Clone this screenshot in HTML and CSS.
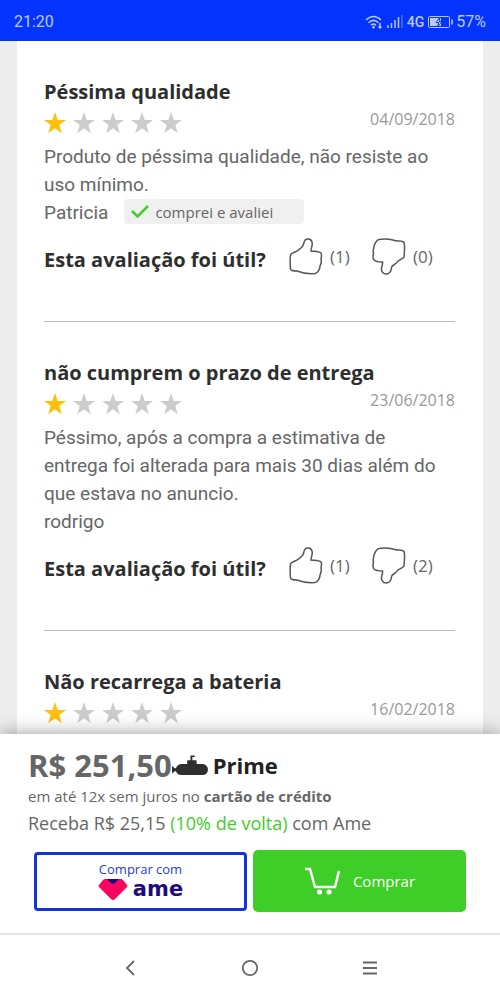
FILE: index.html
```html
<!DOCTYPE html>
<html lang="pt-BR">
<head>
<meta charset="utf-8">
<meta name="viewport" content="width=device-width, initial-scale=1">
<title>Avaliações</title>
<link rel="stylesheet" href="styles.css">
</head>
<body>
<svg class="defs" aria-hidden="true">
  <symbol id="star" viewBox="0 0 22 22"><path d="M11 0l2.7 7.9h8.3l-6.7 5 2.5 8.3L11 16.200l-6.800 5 2.500-8.300-6.700-5h8.300z"/></symbol>
  <symbol id="up" viewBox="0 0 34 37"><path d="M6 14C9 13 11 11 13 9C15 7 14.500 5 15.500 3C17 0 22 .5 23 4C24 7 22 10 22 13C25 13.500 30 13 32 15C33 17 32.500 19 32 21C33 24 32 26 31 28C31 31 29 35 26 35.500C20 36 13 35 8 33C5 33 2 33 1.500 31C1 26 1 21 1.500 17C2 15 4 15 6 14Z"/></symbol>
  <symbol id="down" viewBox="0 0 34 37"><path d="M7 1.500C12 .5 17 1 21 2C25 4 30 2 32 4.500C33 8 32.500 14 32 19C31 21 28 21.500 26 23C24 27 19 27 19.500 30C19 34 17 36 14 36C11 36 9 33 9.500 30C10 27 11 26 10.500 24C7 24 4 24 2 22C.5 20 1 17 1.500 15C.5 12 2 11 2 8C3 6 4 2 7 1.500Z"/></symbol>
</svg>

<header class="status">
  <span class="clock">21:20</span>
  <svg class="wifi" viewBox="0 0 18 14"><path d="M1 5Q8.500-2 16 5M3.500 7.800Q8.500 3 13.500 7.800M6 10.300Q8.500 8 11 10.300"/><circle cx="8.500" cy="12.300" r="1.200"/><path d="M15 13V8M13.500 11.500L15 13l1.500-1.500"/></svg>
  <svg class="signal" viewBox="0 0 16 13"><path d="M1 13v-3M4.500 13V8M8 13V5M11.500 13V2"/><path class="faint" d="M15 13V0"/></svg>
  <span class="net">4G</span>
  <svg class="battery" viewBox="0 0 26 12"><rect class="shell" x=".5" y=".5" width="21" height="11" rx="1"/><rect x="2" y="2" width="11" height="8"/><path d="M24 3.500v5"/><path class="bolt" d="M12 1.500L8 6.500h3L9.500 10.500 14 5.500h-3z"/></svg>
  <span class="percent">57%</span>
</header>

<main class="page">
  <div class="card">
    <article class="review">
      <h2 class="title">Péssima qualidade</h2>
      <div class="rating">
        <div class="stars" role="img" aria-label="1 de 5"><svg class="on"><use href="#star"/></svg><svg><use href="#star"/></svg><svg><use href="#star"/></svg><svg><use href="#star"/></svg><svg><use href="#star"/></svg></div>
        <time class="date">04/09/2018</time>
      </div>
      <p class="text">Produto de péssima qualidade, não resiste ao uso mínimo.</p>
      <div class="author">Patricia <span class="badge"><svg class="check" viewBox="0 0 18 13"><path d="M1 6l5.500 5.500L17 1"/></svg>comprei e avaliei</span></div>
      <div class="votes">
        <span class="question">Esta avaliação foi útil?</span>
        <button class="vote" aria-label="Útil"><svg><use href="#up"/></svg>(1)</button>
        <button class="vote" aria-label="Não útil"><svg><use href="#down"/></svg>(0)</button>
      </div>
    </article>
    <article class="review">
      <h2 class="title">não cumprem o prazo de entrega</h2>
      <div class="rating">
        <div class="stars" role="img" aria-label="1 de 5"><svg class="on"><use href="#star"/></svg><svg><use href="#star"/></svg><svg><use href="#star"/></svg><svg><use href="#star"/></svg><svg><use href="#star"/></svg></div>
        <time class="date">23/06/2018</time>
      </div>
      <p class="text">Péssimo, após a compra a estimativa de entrega foi alterada para mais 30 dias além do que estava no anuncio.</p>
      <div class="author">rodrigo</div>
      <div class="votes">
        <span class="question">Esta avaliação foi útil?</span>
        <button class="vote" aria-label="Útil"><svg><use href="#up"/></svg>(1)</button>
        <button class="vote" aria-label="Não útil"><svg><use href="#down"/></svg>(2)</button>
      </div>
    </article>
    <article class="review">
      <h2 class="title">Não recarrega a bateria</h2>
      <div class="rating">
        <div class="stars" role="img" aria-label="1 de 5"><svg class="on"><use href="#star"/></svg><svg><use href="#star"/></svg><svg><use href="#star"/></svg><svg><use href="#star"/></svg><svg><use href="#star"/></svg></div>
        <time class="date">16/02/2018</time>
      </div>
    </article>
  </div>
</main>

<section class="buy">
  <div class="price-row">
    <strong class="price">R$ 251,50</strong>
    <svg class="sub" viewBox="0 0 38 21"><rect x="4" y="9" width="34" height="11.500" rx="5.700"/><path d="M16 10V6q0-1 1-1h2.500V0H24v1.500h-2.500V5H25q1 0 1 1v4zM0 11l3 2.500h3v3H3L0 19z"/></svg>
    <strong class="prime">Prime</strong>
  </div>
  <p class="terms">em até 12x sem juros no <b>cartão de crédito</b></p>
  <p class="cashback">Receba R$ 25,15 <span class="green">(10% de volta)</span> com Ame</p>
  <div class="actions">
    <button class="ame"><span>Comprar com</span>
      <span class="ame-logo"><svg class="heart" viewBox="0 0 30 23"><path d="M7 1h16q1 0 2 1l4 5q1 1 0 2L17 21q-2 2-4 0L1 9Q0 8 1 7l4-5q1-1 2-1z"/><path class="notch" d="M9 1h12l-4 4q-2 2-4 0z"/></svg><b>ame</b></span>
    </button>
    <button class="cart"><svg viewBox="0 0 36 28"><path d="M1 2h5l5 18h20l4-16"/><circle cx="15.500" cy="25" r="2.600"/><circle cx="25" cy="25" r="2.600"/></svg>Comprar</button>
  </div>
</section>

<nav class="nav">
  <button aria-label="Voltar"><svg viewBox="0 0 18 18"><path d="M13 2L6 9l7 7"/></svg></button>
  <button aria-label="Início"><svg viewBox="0 0 18 18"><circle cx="9" cy="9" r="7.200"/></svg></button>
  <button aria-label="Menu"><svg viewBox="0 0 18 18"><path d="M2 3.500h14M2 9h14M2 14.500h14"/></svg></button>
</nav>
</body>
</html>
```
FILE: styles.css
```css
* { box-sizing: border-box; }
body {
  margin: 0;
  height: 100vh;
  display: flex;
  flex-direction: column;
  background: #fff;
  color: #666;
  font-family: "Open Sans", "Noto Sans", sans-serif;
}
h2, p { margin: 0; }
button {
  margin: 0;
  padding: 0;
  border: 0;
  background: none;
  color: inherit;
  font: inherit;
}
.defs { display: none; }

.status {
  flex: none;
  display: flex;
  align-items: center;
  height: 41px;
  padding: 2px 14px 0;
  background: #0433ff;
  color: #b9c8ff;
  font: 16px Roboto, sans-serif;
}
.clock { flex: 1; }
.status svg { fill: none; stroke: #b9c8ff; stroke-width: 1.5; }
.wifi { width: 18px; height: 14px; }
.wifi circle { fill: #b9c8ff; stroke: none; }
.signal { width: 16px; height: 13px; margin-left: 4px; }
.signal .faint { opacity: .4; }
.net { margin: 0 4px; font-size: 14px; font-weight: 500; }
.battery { width: 26px; height: 12px; margin-right: 2px; }
.battery rect { fill: #b9c8ff; stroke: none; }
.battery .shell { fill: none; stroke: #b9c8ff; stroke-width: 1; }
.battery .bolt { fill: #fff; stroke: #0433ff; stroke-width: 1; }

.page {
  flex: 1;
  min-height: 0;
  overflow: hidden;
  padding: 0 17px;
  background: #ededed;
}
.card { padding: 0 28px 0 27px; background: #fff; }
.review { padding: 37px 0 36px; border-bottom: 1px solid #bbb; }
.title { font-size: 20px; line-height: 28px; color: #2e2e2e; }
.rating {
  display: flex;
  justify-content: space-between;
  height: 37px;
}
.stars { display: flex; gap: 7px; padding-top: 6px; }
.stars svg { width: 22px; height: 22px; fill: #ccc; }
.stars .on { fill: #ffbf0b; }
.date { font-size: 16px; line-height: 26px; color: #999; }
.text, .author { font-family: Roboto, sans-serif; font-size: 19px; line-height: 28px; }
.text { padding-right: 8px; }
.author { display: flex; gap: 16px; height: 28px; }
.badge {
  display: flex;
  align-items: center;
  gap: 6px;
  width: 180px;
  height: 25px;
  padding-left: 7px;
  border-radius: 4px;
  background: #f0f0f0;
  font: 15px "Open Sans", sans-serif;
}
.check { width: 18px; height: 13px; fill: none; stroke: #3fcd28; stroke-width: 2.5; }
.votes { display: flex; align-items: center; height: 58px; }
.question {
  flex: none;
  width: 245px;
  padding-top: 6px;
  font-size: 20px;
  font-weight: 700;
  color: #2e2e2e;
  white-space: nowrap;
}
.vote { display: flex; align-items: center; gap: 7px; width: 83px; font-size: 17px; }
.vote svg { width: 34px; height: 37px; fill: none; stroke: #555; stroke-width: 1.5; }

.buy {
  flex: none;
  height: 199px;
  padding: 13px 34px 0 28px;
  background: #fff;
  box-shadow: 0 0 18px rgba(0, 0, 0, .4);
  position: relative;
}
.price-row { display: flex; align-items: center; height: 36px; }
.price { font-size: 31px; }
.sub { width: 36px; height: 21px; fill: #2e2e2e; }
.prime { margin-left: 5px; font-size: 22px; color: #222; }
.terms { font-size: 15px; line-height: 26px; }
.cashback { font-size: 18px; line-height: 28px; }
.green { color: #3fcd28; }
.actions {
  display: grid;
  grid-template-columns: 1fr 1fr;
  align-items: center;
  gap: 6px;
  margin-top: 13px;
  padding-left: 6px;
}
.ame {
  height: 59px;
  border: 3px solid #1233dd;
  border-radius: 4px;
  color: #2440cf;
  font-size: 13px;
  line-height: 16px;
}
.ame-logo { display: flex; align-items: center; justify-content: center; gap: 5px; height: 25px; }
.ame-logo b { font: 700 21px/24px "DejaVu Sans", sans-serif; color: #22087d; }
.heart { width: 30px; height: 23px; fill: #f7055f; }
.heart .notch { fill: #22087d; }
.cart {
  display: flex;
  align-items: center;
  justify-content: center;
  gap: 13px;
  height: 62px;
  border-radius: 5px;
  background: #3fcd28;
  color: #fff;
  font-size: 15px;
}
.cart svg { width: 36px; height: 28px; fill: none; stroke: #fff; stroke-width: 2.5; }
.cart circle { fill: #fff; stroke: none; }

.nav {
  flex: none;
  position: relative;
  display: flex;
  justify-content: center;
  height: 67px;
  padding-bottom: 3px;
  border-top: 2px solid #e4e4e4;
  background: #fff;
}
.nav button { width: 24%; }
.nav svg { width: 18px; height: 18px; fill: none; stroke: #666; stroke-width: 1.8; vertical-align: middle; }
```
